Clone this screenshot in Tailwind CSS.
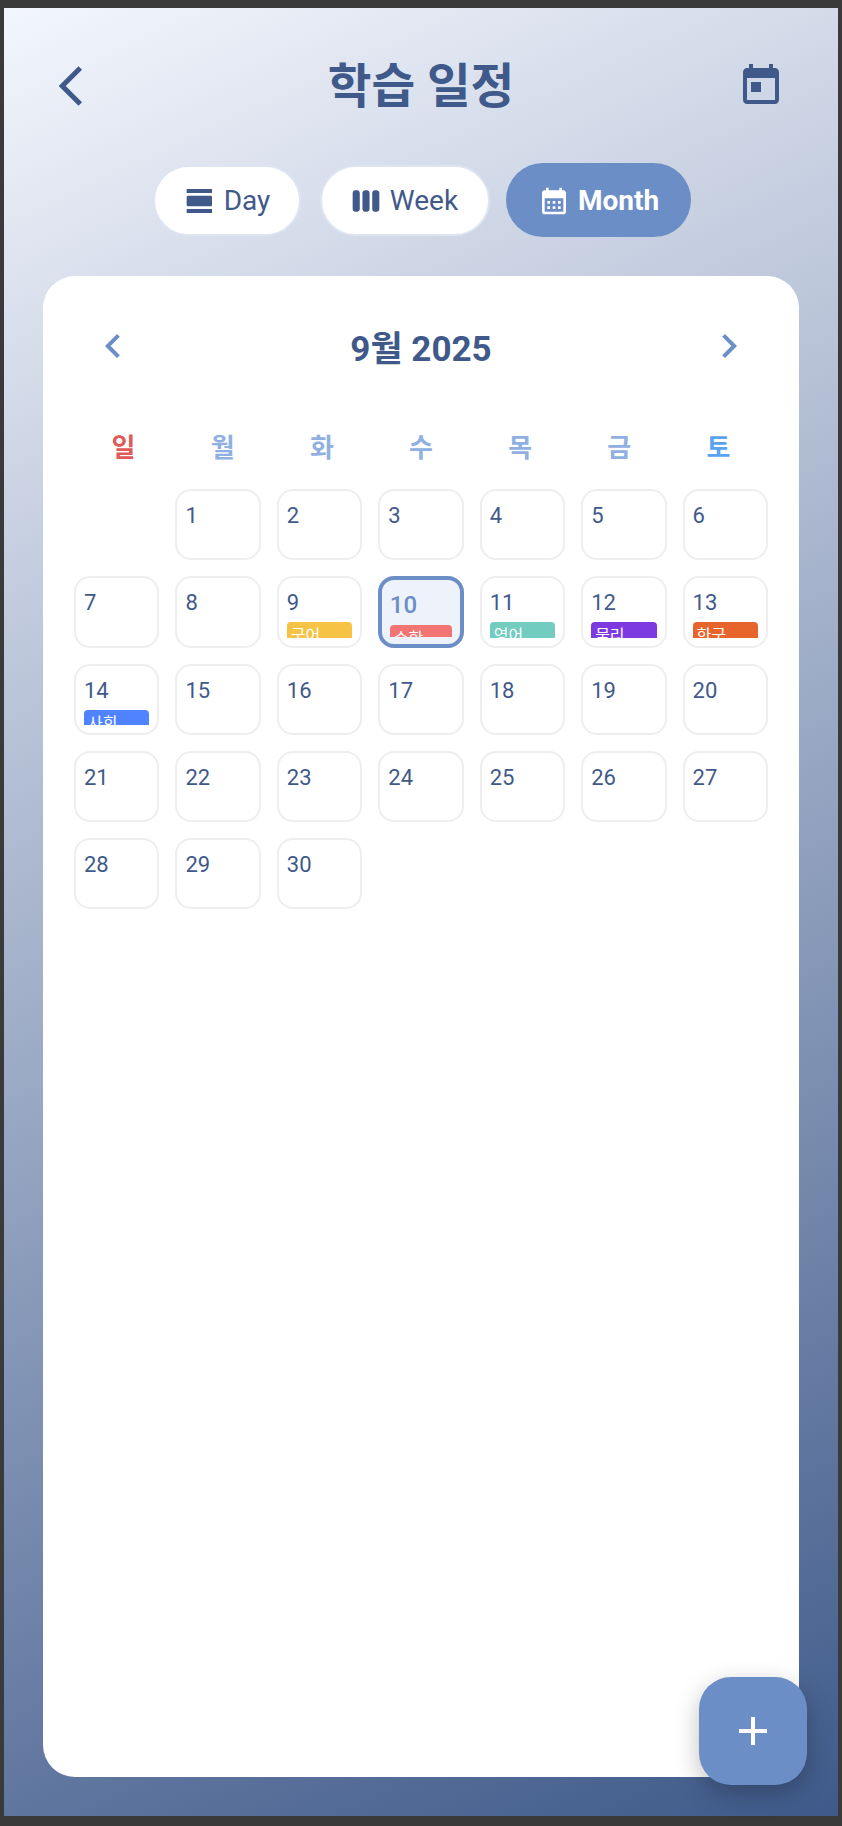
<!DOCTYPE html>
<html lang="ko">
<head>
<meta charset="utf-8">
<script src="https://cdn.jsdelivr.net/npm/@tailwindcss/browser@4"></script>
<title>학습 일정</title>
</head>
<body class="m-0 bg-[#3a3a3a]">
<div class="w-[842px] h-[1826px] pt-2 pb-[10px] pl-1 pr-1 font-['Roboto','Noto_Sans_CJK_KR',sans-serif]">
  <div class="relative h-full flex flex-col bg-linear-[155deg] from-[#f3f6fd] to-[#3f5a8a] text-[#3f5a8a]">
    <header class="flex items-center justify-between h-[48px] mt-[54px] px-[53px]">
      <svg class="w-12 h-12 fill-current" viewBox="0 0 24 24"><path transform="translate(.85 0)" d="M11.67 3.87L9.9 2.1 0 12l9.9 9.9 1.77-1.77L3.54 12z"/></svg>
      <h1 class="text-[47.5px] leading-[48px] pt-[2px] font-bold">학습 일정</h1>
      <svg class="w-12 h-12 fill-current" viewBox="0 0 24 24"><path d="M19 3h-1V1h-2v2H8V1H6v2H5c-1.11 0-1.99.9-1.99 2L3 19c0 1.1.89 2 2 2h14c1.1 0 2-.9 2-2V5c0-1.1-.9-2-2-2zm0 16H5V8h14v11zM7 10h5v5H7z"/></svg>
    </header>
    <nav class="flex justify-center items-center gap-[16px] mt-[53px] ml-[2px] text-[28px] leading-none">
      <button class="flex items-center gap-2 h-[71px] w-[148px] mr-[3px] pt-[1px] justify-center rounded-full bg-white border-2 border-[#dde4f2]">
        <svg class="w-8 h-8 fill-current" viewBox="0 0 24 24"><path d="M2 21h19v-3H2v3zM20 8H3c-.55 0-1 .45-1 1v6c0 .55.45 1 1 1h17c.55 0 1-.45 1-1V9c0-.55-.45-1-1-1zM2 3v3h19V3H2z"/></svg>
        <span>Day</span>
      </button>
      <button class="flex items-center gap-2 h-[71px] w-[170px] pt-[1px] pr-[2px] justify-center rounded-full bg-white border-2 border-[#dde4f2]">
        <svg class="w-8 h-8 fill-current" viewBox="0 0 24 24"><path d="M5.33 20H4c-1.1 0-2-.9-2-2V6c0-1.1.9-2 2-2h1.33c1.1 0 2 .9 2 2v12c0 1.1-.9 2-2 2zM22 18V6c0-1.1-.9-2-2-2h-1.33c-1.1 0-2 .9-2 2v12c0 1.1.9 2 2 2H20c1.1 0 2-.9 2-2zm-7.33 0V6c0-1.1-.9-2-2-2h-1.33c-1.1 0-2 .9-2 2v12c0 1.1.9 2 2 2h1.33c1.1 0 2-.9 2-2z"/></svg>
        <span>Week</span>
      </button>
      <button class="flex items-center gap-2 h-[74px] w-[185px] pt-[1px] justify-center rounded-full bg-[#6c8ec6] text-white font-bold">
        <svg class="w-8 h-8 fill-current" viewBox="0 0 24 24"><path d="M19 4h-1V2h-2v2H8V2H6v2H5c-1.11 0-1.99.9-1.99 2L3 20c0 1.1.89 2 2 2h14c1.1 0 2-.9 2-2V6c0-1.1-.9-2-2-2zm0 16H5V10h14v10zM9 14H7v-2h2v2zm4 0h-2v-2h2v2zm4 0h-2v-2h2v2zm-8 4H7v-2h2v2zm4 0h-2v-2h2v2zm4 0h-2v-2h2v2z"/></svg>
        <span>Month</span>
      </button>
    </nav>
    <main class="mt-[39px] mx-[39px] h-[1501px] rounded-[32px] bg-white pt-[46px] px-[31px]">
      <div class="flex items-center justify-between px-[15px] h-12">
        <svg class="w-12 h-12 fill-[#6c8ec6]" viewBox="0 0 24 24"><path d="M15.41 7.41L14 6l-6 6 6 6 1.41-1.41L10.83 12z"/></svg>
        <h2 class="text-[35px] leading-[48px] pt-[8px] font-bold">9월 2025</h2>
        <svg class="w-12 h-12 fill-[#6c8ec6]" viewBox="0 0 24 24"><path d="M10 6L8.59 7.41 13.17 12l-4.58 4.59L10 18l6-6z"/></svg>
      </div>
      <div class="grid grid-cols-7 mt-[60px] text-center text-[26px] leading-[36px] font-bold text-[#8fb0e0]">
        <div class="text-[#e05a5a]">일</div><div>월</div><div>화</div><div>수</div><div>목</div><div>금</div><div class="text-[#5aa2f2]">토</div>
      </div>
      <div class="grid grid-cols-7 gap-x-4 gap-y-4 mt-[23px] text-[22px] leading-[33px]">
        <div></div>
        <div class="h-[71.3px] rounded-[16px] border-2 border-[#eeeeee] p-2 overflow-hidden"><div class="h-full overflow-hidden">1</div></div>
        <div class="h-[71.3px] rounded-[16px] border-2 border-[#eeeeee] p-2 overflow-hidden"><div class="h-full overflow-hidden">2</div></div>
        <div class="h-[71.3px] rounded-[16px] border-2 border-[#eeeeee] p-2 overflow-hidden"><div class="h-full overflow-hidden">3</div></div>
        <div class="h-[71.3px] rounded-[16px] border-2 border-[#eeeeee] p-2 overflow-hidden"><div class="h-full overflow-hidden">4</div></div>
        <div class="h-[71.3px] rounded-[16px] border-2 border-[#eeeeee] p-2 overflow-hidden"><div class="h-full overflow-hidden">5</div></div>
        <div class="h-[71.3px] rounded-[16px] border-2 border-[#eeeeee] p-2 overflow-hidden"><div class="h-full overflow-hidden">6</div></div>

        <div class="h-[71.3px] rounded-[16px] border-2 border-[#eeeeee] p-2 overflow-hidden"><div class="h-full overflow-hidden">7</div></div>
        <div class="h-[71.3px] rounded-[16px] border-2 border-[#eeeeee] p-2 overflow-hidden"><div class="h-full overflow-hidden">8</div></div>
        <div class="h-[71.3px] rounded-[16px] border-2 border-[#eeeeee] p-2 overflow-hidden"><div class="h-full overflow-hidden">9<div class="mt-[3px] rounded-[4px] bg-[#f6c344] px-[4px] text-[16px] leading-[24px] pt-[2px] text-white">국어</div></div></div>
        <div class="h-[71.3px] rounded-[16px] border-4 border-[#6c8ec6] bg-[#eef2fb] py-[7px] px-[7.5px] overflow-hidden text-[#6c8ec6] font-medium text-[24px] leading-[36px]"><div class="h-full overflow-hidden">10<div class="mt-[2px] rounded-[4px] bg-[#f27573] px-[4px] text-[16px] leading-[24px] pt-[2px] text-white font-normal">수학</div></div></div>
        <div class="h-[71.3px] rounded-[16px] border-2 border-[#eeeeee] p-2 overflow-hidden"><div class="h-full overflow-hidden">11<div class="mt-[3px] rounded-[4px] bg-[#73ccc0] px-[4px] text-[16px] leading-[24px] pt-[2px] text-white">영어</div></div></div>
        <div class="h-[71.3px] rounded-[16px] border-2 border-[#eeeeee] p-2 overflow-hidden"><div class="h-full overflow-hidden">12<div class="mt-[3px] rounded-[4px] bg-[#7c3ae0] px-[4px] text-[16px] leading-[24px] pt-[2px] text-white">물리</div></div></div>
        <div class="h-[71.3px] rounded-[16px] border-2 border-[#eeeeee] p-2 overflow-hidden"><div class="h-full overflow-hidden">13<div class="mt-[3px] rounded-[4px] bg-[#e8642d] px-[4px] text-[16px] leading-[24px] pt-[2px] text-white">한국</div></div></div>

        <div class="h-[71.3px] rounded-[16px] border-2 border-[#eeeeee] p-2 overflow-hidden"><div class="h-full overflow-hidden">14<div class="mt-[3px] rounded-[4px] bg-[#4f83ff] px-[4px] text-[16px] leading-[24px] pt-[2px] text-white">사회</div></div></div>
        <div class="h-[71.3px] rounded-[16px] border-2 border-[#eeeeee] p-2 overflow-hidden"><div class="h-full overflow-hidden">15</div></div>
        <div class="h-[71.3px] rounded-[16px] border-2 border-[#eeeeee] p-2 overflow-hidden"><div class="h-full overflow-hidden">16</div></div>
        <div class="h-[71.3px] rounded-[16px] border-2 border-[#eeeeee] p-2 overflow-hidden"><div class="h-full overflow-hidden">17</div></div>
        <div class="h-[71.3px] rounded-[16px] border-2 border-[#eeeeee] p-2 overflow-hidden"><div class="h-full overflow-hidden">18</div></div>
        <div class="h-[71.3px] rounded-[16px] border-2 border-[#eeeeee] p-2 overflow-hidden"><div class="h-full overflow-hidden">19</div></div>
        <div class="h-[71.3px] rounded-[16px] border-2 border-[#eeeeee] p-2 overflow-hidden"><div class="h-full overflow-hidden">20</div></div>

        <div class="h-[71.3px] rounded-[16px] border-2 border-[#eeeeee] p-2 overflow-hidden"><div class="h-full overflow-hidden">21</div></div>
        <div class="h-[71.3px] rounded-[16px] border-2 border-[#eeeeee] p-2 overflow-hidden"><div class="h-full overflow-hidden">22</div></div>
        <div class="h-[71.3px] rounded-[16px] border-2 border-[#eeeeee] p-2 overflow-hidden"><div class="h-full overflow-hidden">23</div></div>
        <div class="h-[71.3px] rounded-[16px] border-2 border-[#eeeeee] p-2 overflow-hidden"><div class="h-full overflow-hidden">24</div></div>
        <div class="h-[71.3px] rounded-[16px] border-2 border-[#eeeeee] p-2 overflow-hidden"><div class="h-full overflow-hidden">25</div></div>
        <div class="h-[71.3px] rounded-[16px] border-2 border-[#eeeeee] p-2 overflow-hidden"><div class="h-full overflow-hidden">26</div></div>
        <div class="h-[71.3px] rounded-[16px] border-2 border-[#eeeeee] p-2 overflow-hidden"><div class="h-full overflow-hidden">27</div></div>

        <div class="h-[71.3px] rounded-[16px] border-2 border-[#eeeeee] p-2 overflow-hidden"><div class="h-full overflow-hidden">28</div></div>
        <div class="h-[71.3px] rounded-[16px] border-2 border-[#eeeeee] p-2 overflow-hidden"><div class="h-full overflow-hidden">29</div></div>
        <div class="h-[71.3px] rounded-[16px] border-2 border-[#eeeeee] p-2 overflow-hidden"><div class="h-full overflow-hidden">30</div></div>
      </div>
    </main>
    <button class="absolute left-[695px] top-[1669px] w-[108px] h-[108px] rounded-[32px] bg-[#6c8ec6] shadow-[0_8px_24px_rgba(0,0,0,0.25)] flex items-center justify-center">
      <svg class="w-12 h-12 fill-white" viewBox="0 0 24 24"><path d="M19 13h-6v6h-2v-6H5v-2h6V5h2v6h6v2z"/></svg>
    </button>
  </div>
</div>
</body>
</html>
